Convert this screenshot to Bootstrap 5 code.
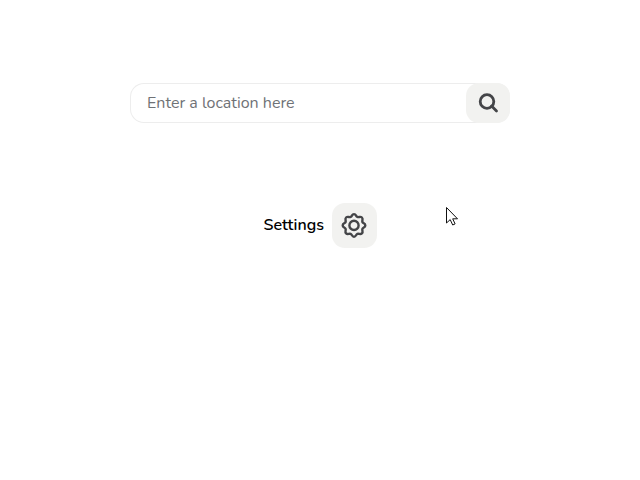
<!DOCTYPE html>
<html lang="en">
<head>
<meta charset="utf-8">
<meta name="viewport" content="width=device-width, initial-scale=1">
<title>Location search</title>
<link href="https://cdn.jsdelivr.net/npm/bootstrap@5.3.0/dist/css/bootstrap.min.css" rel="stylesheet">
<style>
body { font-family: Nunito, "Open Sans", "Noto Sans", sans-serif; color: #000; height: 480px; overflow: hidden; background: #fff; }
.search-form { width: 380px; height: 40px; margin-top: 83px; border-radius: 14px; box-shadow: inset 0 0 0 1px #ededed; }
.search-form .form-control { font-size: 16px; padding: 0 16px 0 17px; color: #333; }
.search-form .form-control::placeholder { color: #6f7276; opacity: 1; }
.tile { background: #f2f2f0; border-radius: 13px; color: #444548; }
.tile-search { width: 44px; height: 40px; }
.tile-settings { width: 45px; height: 45px; }
.tile-settings svg { margin: 0 1px 0 0; }
.settings-row { margin-top: 80px; }
.settings-label { font-size: 16px; font-weight: 600; line-height: 24px; width: 60px; padding-bottom: 2px; }
.pointer { left: 445px; top: 206px; }
</style>
</head>
<body class="d-flex flex-column align-items-center position-relative">
<form class="search-form d-flex flex-shrink-0">
  <input type="text" class="form-control border-0 bg-transparent shadow-none" placeholder="Enter a location here" aria-label="Location">
  <button type="button" class="btn tile tile-search border-0 p-0 flex-shrink-0 d-flex align-items-center justify-content-center" aria-label="Search">
    <svg width="22" height="22" viewBox="0 0 22 22" fill="none" stroke="currentColor" stroke-width="2.8" stroke-linecap="round"><circle cx="10" cy="9.5" r="6.8"/><path d="M14.6 14.1L19.5 19"/></svg>
  </button>
</form>
<div class="settings-row d-flex align-items-center gap-2">
  <span class="settings-label text-nowrap">Settings</span>
  <button type="button" class="btn tile tile-settings border-0 p-0 d-flex align-items-center justify-content-center" aria-label="Settings">
    <svg width="28" height="28" viewBox="-14 -13.4 28 28" fill="none" stroke="currentColor" stroke-width="2.4" stroke-linejoin="round"><circle r="4.6"/><path d="M0-11.3C2.2-11.3 1.8-9 3.4-8.4C5-7.8 6.3-9.5 7.9-7.9C9.5-6.3 7.8-5 8.4-3.4C9-1.8 11.3-2.2 11.3 0C11.3 2.2 9 1.8 8.4 3.4C7.8 5 9.5 6.3 7.9 7.9C6.3 9.5 5 7.8 3.4 8.4C1.8 9 2.2 11.3 0 11.3C-2.2 11.3-1.8 9-3.4 8.4C-5 7.8-6.3 9.5-7.9 7.9C-9.5 6.3-7.8 5-8.4 3.4C-9 1.8-11.3 2.2-11.3 0C-11.3-2.2-9-1.8-8.4-3.4C-7.8-5-9.5-6.3-7.9-7.9C-6.3-9.5-5-7.8-3.4-8.4C-1.8-9-2.2-11.3 0-11.3Z"/></svg>
  </button>
</div>
<svg class="pointer position-absolute" width="14" height="21" viewBox="0 0 14 21" fill="#fff" stroke="#111" stroke-width="1"><path d="M1.5 1.5V17L5.2 13.6L7.7 19L10.1 17.9L7.7 12.8H12.5Z"/></svg>
<script src="https://cdn.jsdelivr.net/npm/bootstrap@5.3.0/dist/js/bootstrap.bundle.min.js"></script>
</body>
</html>
